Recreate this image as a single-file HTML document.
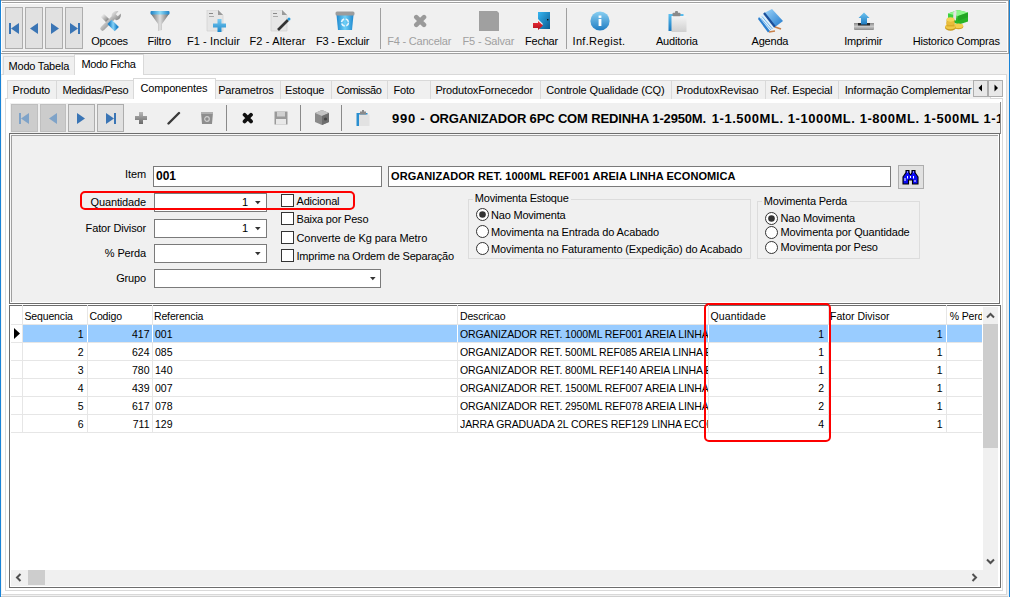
<!DOCTYPE html>
<html><head><meta charset="utf-8"><style>
html,body{margin:0;padding:0;width:1010px;height:597px;overflow:hidden;background:#f0f0f0}
body{position:relative;font-family:"Liberation Sans", sans-serif}
body div{position:absolute}
</style></head><body>
<div style="left:0px;top:0px;width:1010px;height:597px;background:#f0f0f0"></div>
<div style="left:0px;top:0px;width:1px;height:597px;background:#1883d7"></div>
<div style="left:1009px;top:0px;width:1px;height:597px;background:#1883d7"></div>
<div style="left:1px;top:0px;width:1007px;height:1px;background:#a0a0a0"></div>
<div style="left:1px;top:1px;width:1007px;height:1px;background:#ffffff"></div>
<div style="left:2px;top:2px;width:1004px;height:1px;background:#a0a0a0"></div>
<div style="left:2px;top:3px;width:1004px;height:1px;background:#ffffff"></div>
<div style="left:1px;top:1px;width:1px;height:596px;background:#ffffff"></div>
<div style="left:1008px;top:0px;width:1px;height:54px;background:#a0a0a0"></div>
<div style="left:1007px;top:1px;width:1px;height:53px;background:#ffffff"></div>
<div style="left:2px;top:51px;width:1005px;height:1px;background:#a0a0a0"></div>
<div style="left:2px;top:52px;width:1005px;height:1px;background:#ffffff"></div>
<div style="left:1px;top:53px;width:1007px;height:1px;background:#a0a0a0"></div>
<div style="left:5px;top:7px;width:18px;height:42px;background:#e1e1e1;border:1px solid #adadad;box-sizing:border-box"></div>
<div style="left:25px;top:7px;width:18px;height:42px;background:#e1e1e1;border:1px solid #adadad;box-sizing:border-box"></div>
<div style="left:45px;top:7px;width:18px;height:42px;background:#e1e1e1;border:1px solid #adadad;box-sizing:border-box"></div>
<div style="left:65px;top:7px;width:18px;height:42px;background:#e1e1e1;border:1px solid #adadad;box-sizing:border-box"></div>
<svg style="position:absolute;left:9px;top:23px" width="12" height="12" viewBox="0 0 12 12"><rect x="0" y="0" width="2" height="11" fill="#3a75b5"/><path d="M2 5.5 L10 0 L10 11 Z" fill="#3a75b5"/></svg>
<svg style="position:absolute;left:30px;top:23px" width="10" height="12" viewBox="0 0 10 12"><path d="M0 5.5 L8 0 L8 11 Z" fill="#3a75b5"/></svg>
<svg style="position:absolute;left:51px;top:23px" width="10" height="12" viewBox="0 0 10 12"><path d="M8 5.5 L0 0 L0 11 Z" fill="#3a75b5"/></svg>
<svg style="position:absolute;left:70px;top:23px" width="12" height="12" viewBox="0 0 12 12"><path d="M8 5.5 L0 0 L0 11 Z" fill="#3a75b5"/><rect x="8" y="0" width="2" height="11" fill="#3a75b5"/></svg>
<div style="left:380px;top:8px;width:1px;height:41px;background:#a0a0a0"></div>
<div style="left:566px;top:8px;width:1px;height:41px;background:#a0a0a0"></div>
<div style="top:34.7px;font-size:11px;line-height:13px;color:#000;font-weight:normal;white-space:nowrap;letter-spacing:-0.2px;left:49.5px;width:120px;text-align:center;">Opcoes</div>
<div style="top:34.7px;font-size:11px;line-height:13px;color:#000;font-weight:normal;white-space:nowrap;letter-spacing:-0.2px;left:99.19999999999999px;width:120px;text-align:center;">Filtro</div>
<div style="top:34.7px;font-size:11px;line-height:13px;color:#000;font-weight:normal;white-space:nowrap;letter-spacing:0.1px;left:153.5px;width:120px;text-align:center;">F1 - Incluir</div>
<div style="top:34.7px;font-size:11px;line-height:13px;color:#000;font-weight:normal;white-space:nowrap;letter-spacing:0.15px;left:217.5px;width:120px;text-align:center;">F2 - Alterar</div>
<div style="top:34.7px;font-size:11px;line-height:13px;color:#000;font-weight:normal;white-space:nowrap;letter-spacing:-0.2px;left:282.6px;width:120px;text-align:center;">F3 - Excluir</div>
<div style="top:34.7px;font-size:11px;line-height:13px;color:#a0a0a0;font-weight:normal;white-space:nowrap;letter-spacing:-0.2px;left:359.2px;width:120px;text-align:center;">F4 - Cancelar</div>
<div style="top:34.7px;font-size:11px;line-height:13px;color:#a0a0a0;font-weight:normal;white-space:nowrap;letter-spacing:-0.2px;left:428.4px;width:120px;text-align:center;">F5 - Salvar</div>
<div style="top:34.7px;font-size:11px;line-height:13px;color:#000;font-weight:normal;white-space:nowrap;letter-spacing:-0.2px;left:481.5px;width:120px;text-align:center;">Fechar</div>
<div style="top:34.7px;font-size:11px;line-height:13px;color:#000;font-weight:normal;white-space:nowrap;letter-spacing:0.3px;left:539.0px;width:120px;text-align:center;">Inf.Regist.</div>
<div style="top:34.7px;font-size:11px;line-height:13px;color:#000;font-weight:normal;white-space:nowrap;letter-spacing:-0.2px;left:616.8px;width:120px;text-align:center;">Auditoria</div>
<div style="top:34.7px;font-size:11px;line-height:13px;color:#000;font-weight:normal;white-space:nowrap;letter-spacing:-0.2px;left:709.9px;width:120px;text-align:center;">Agenda</div>
<div style="top:34.7px;font-size:11px;line-height:13px;color:#000;font-weight:normal;white-space:nowrap;letter-spacing:-0.2px;left:803.2px;width:120px;text-align:center;">Imprimir</div>
<div style="top:34.7px;font-size:11px;line-height:13px;color:#000;font-weight:normal;white-space:nowrap;letter-spacing:-0.2px;left:896.2px;width:120px;text-align:center;">Historico Compras</div>
<svg style="position:absolute;left:99px;top:10px" width="23" height="23" viewBox="0 0 23 23"><defs><linearGradient id="gw" x1="0" y1="0" x2="1" y2="1"><stop offset="0" stop-color="#f0f0f0"/><stop offset="0.6" stop-color="#a8a8a8"/><stop offset="1" stop-color="#707070"/></linearGradient>
<linearGradient id="gb" x1="0" y1="0" x2="1" y2="0"><stop offset="0" stop-color="#1f86cc"/><stop offset="0.5" stop-color="#86d2f6"/><stop offset="1" stop-color="#1f86cc"/></linearGradient></defs>
<path d="M3 5 L9.5 11.5" stroke="url(#gw)" stroke-width="4.5" stroke-linecap="round"/>
<path d="M3.5 18.5 L14 8" stroke="url(#gw)" stroke-width="4.5" stroke-linecap="round"/>
<path d="M12.5 5.5 C13 2 16 0.5 19.5 1.2 L16.8 4.2 L18.8 6.2 L21.8 3.5 C22.5 7 20.5 10 17 10.3 Z" fill="url(#gw)"/>
<path d="M10.5 11.8 L17.8 19.2" stroke="url(#gb)" stroke-width="6"/></svg>
<svg style="position:absolute;left:150px;top:10px" width="21" height="22" viewBox="0 0 21 22"><defs><linearGradient id="gf" x1="0" y1="0" x2="1" y2="0"><stop offset="0" stop-color="#6a6a6a"/><stop offset="0.5" stop-color="#e0e0e0"/><stop offset="1" stop-color="#6a6a6a"/></linearGradient></defs>
<path d="M1 4 L19 4 L12 14 L12 20 L8 21 L8 14 Z" fill="url(#gf)"/>
<defs><linearGradient id="gfb" x1="0" y1="0" x2="1" y2="0"><stop offset="0" stop-color="#1c7fc4"/><stop offset="0.5" stop-color="#8fdcf8"/><stop offset="1" stop-color="#1c7fc4"/></linearGradient></defs><rect x="0.5" y="1" width="19" height="3.5" rx="1" fill="url(#gfb)"/></svg>
<svg style="position:absolute;left:206px;top:10px" width="22" height="23" viewBox="0 0 22 23"><path d="M1 0 L12 0 L17 5 L17 21 L1 21 Z" fill="#e6e6e6" stroke="#cfcfcf" stroke-width="0.6"/><path d="M12 0 L12 5 L17 5 Z" fill="#9a9a9a"/>
<rect x="3" y="3" width="4" height="1" fill="#888"/><rect x="3" y="6" width="5" height="1" fill="#aaa"/>
<defs><linearGradient id="gp" x1="0" y1="0" x2="0" y2="1"><stop offset="0" stop-color="#7ccdf3"/><stop offset="1" stop-color="#1a85c8"/></linearGradient></defs><path d="M7 13.5 L11.5 13.5 L11.5 9 L15.5 9 L15.5 13.5 L20 13.5 L20 17.5 L15.5 17.5 L15.5 22 L11.5 22 L11.5 17.5 L7 17.5 Z" fill="url(#gp)"/></svg>
<svg style="position:absolute;left:270px;top:10px" width="22" height="23" viewBox="0 0 22 23"><path d="M1 0 L12 0 L17 5 L17 21 L1 21 Z" fill="#e6e6e6" stroke="#cfcfcf" stroke-width="0.6"/><path d="M12 0 L12 5 L17 5 Z" fill="#9a9a9a"/>
<rect x="3" y="3" width="4" height="1" fill="#888"/><rect x="3" y="6" width="5" height="1" fill="#aaa"/>
<path d="M8 20 L18 10" stroke="#333" stroke-width="2.6"/><circle cx="19" cy="9" r="1.5" fill="#2a9ad8"/></svg>
<svg style="position:absolute;left:335px;top:11px" width="21" height="20" viewBox="0 0 21 20"><defs><linearGradient id="gbin" x1="0" y1="0" x2="1" y2="0"><stop offset="0" stop-color="#1e88cf"/><stop offset="0.5" stop-color="#6fd0f7"/><stop offset="1" stop-color="#1e88cf"/></linearGradient></defs>
<path d="M1.5 4 L18.5 4 L17 19 L3 19 Z" fill="url(#gbin)"/><rect x="0.5" y="0.5" width="19" height="4" rx="1.5" fill="#9c9c9c"/>
<circle cx="10" cy="11.5" r="3.5" fill="none" stroke="#eaf6fd" stroke-width="1.6" stroke-dasharray="4 1.6"/></svg>
<svg style="position:absolute;left:413px;top:14px" width="15" height="14" viewBox="0 0 15 14"><path d="M3.3 3.2 L11 10.8 M11 3.2 L3.3 10.8" stroke="#9a9a9a" stroke-width="4.6" stroke-linecap="round"/></svg>
<svg style="position:absolute;left:479px;top:11px" width="20" height="20" viewBox="0 0 20 20"><path d="M0 0 L18 0 L20 2 L20 20 L0 20 Z" fill="#a0a0a0"/></svg>
<svg style="position:absolute;left:532px;top:11px" width="19" height="20" viewBox="0 0 19 20"><defs><linearGradient id="gd" x1="0" y1="0" x2="1" y2="1"><stop offset="0" stop-color="#36b6f2"/><stop offset="1" stop-color="#0b5a91"/></linearGradient>
<linearGradient id="gr" x1="0" y1="0" x2="0" y2="1"><stop offset="0" stop-color="#f0303a"/><stop offset="1" stop-color="#b0101a"/></linearGradient></defs>
<path d="M6 1 L18 1 L18 18 L7 18 L11 13 L6 8 Z" fill="url(#gd)"/><rect x="15" y="8" width="1.4" height="1.4" fill="#111"/>
<path d="M1 12 L6 12 L6 10 L11 14.5 L6 19 L6 17 L1 17 Z" fill="url(#gr)"/></svg>
<svg style="position:absolute;left:590px;top:11px" width="20" height="20" viewBox="0 0 20 20"><defs><linearGradient id="gi" x1="0" y1="0" x2="0" y2="1"><stop offset="0" stop-color="#8ad0f2"/><stop offset="1" stop-color="#1f7cc2"/></linearGradient></defs>
<circle cx="10" cy="10" r="9.6" fill="url(#gi)"/><rect x="8.6" y="8" width="2.8" height="7" fill="#fff"/><rect x="8.6" y="4.5" width="2.8" height="2.4" fill="#fff"/></svg>
<svg style="position:absolute;left:668px;top:11px" width="20" height="21" viewBox="0 0 20 21"><defs><linearGradient id="gcb" x1="0" y1="0" x2="0" y2="1"><stop offset="0" stop-color="#5cc0f0"/><stop offset="1" stop-color="#1a78c0"/></linearGradient><linearGradient id="gcp" x1="0" y1="0" x2="0" y2="1"><stop offset="0" stop-color="#f4f4f4"/><stop offset="1" stop-color="#cfcfcf"/></linearGradient></defs>
<rect x="0.5" y="3" width="15" height="17" fill="url(#gcb)"/><rect x="3.5" y="5" width="15" height="16" fill="url(#gcp)"/>
<rect x="4.5" y="1.8" width="8" height="3.5" rx="1" fill="#8a8a8a"/><rect x="7" y="0" width="3" height="2.5" rx="1" fill="#8a8a8a"/></svg>
<svg style="position:absolute;left:758px;top:8px" width="26" height="25" viewBox="0 0 26 25"><defs><linearGradient id="gbk" x1="0" y1="0" x2="1" y2="1"><stop offset="0" stop-color="#9fd6fa"/><stop offset="1" stop-color="#1f78cc"/></linearGradient></defs>
<path d="M6 5 L14 1 L25 13 L17 19 Z" fill="url(#gbk)"/>
<path d="M1 9 L6 5 L17 19 L12 23 Z" fill="#dff0fb"/>
<path d="M2.5 10 L13 22 M4 8.5 L14.5 21" stroke="#5aa6e6" stroke-width="0.8"/>
<path d="M1 9 L12 23 L10 24.5 L0 11 Z" fill="#2b7fd0"/>
<path d="M6 5 L17 19" stroke="#1b4f9a" stroke-width="2.2"/>
<path d="M17 19 L23 21" stroke="#c8804a" stroke-width="1.8"/><path d="M11 24 L17 23" stroke="#c8804a" stroke-width="1.3"/></svg>
<svg style="position:absolute;left:853px;top:12px" width="22" height="19" viewBox="0 0 22 19"><defs><linearGradient id="gu" x1="0" y1="0" x2="0" y2="1"><stop offset="0" stop-color="#6cc3f0"/><stop offset="1" stop-color="#1f7cc2"/></linearGradient>
<linearGradient id="gt" x1="0" y1="0" x2="0" y2="1"><stop offset="0" stop-color="#8a8a8a"/><stop offset="0.5" stop-color="#c8c8c8"/><stop offset="1" stop-color="#8a8a8a"/></linearGradient></defs>
<path d="M1 11 L21 11 L21 17 Q21 18 20 18 L2 18 Q1 18 1 17 Z" fill="url(#gt)"/><rect x="5" y="11" width="12" height="2.5" fill="#2a2a2a"/>
<path d="M11 0.5 L16.5 6 L14 6 L14 12.5 L8 12.5 L8 6 L5.5 6 Z" fill="url(#gu)"/></svg>
<svg style="position:absolute;left:944px;top:9px" width="25" height="23" viewBox="0 0 25 23"><path d="M4 4.5 L14 1 L24 3.5 L24 8 L14 12 L4 9 Z" fill="#3fcf3f"/><path d="M4 4.5 L14 1 L24 3.5 L14 7 Z" fill="#8cf78a"/>
<path d="M9 10 L19 6.5 L24 8 L24 12.5 L15 15.5 L9 13.5 Z" fill="#27b527"/><path d="M14 7 L24 3.5 L24 8 L14 12 Z" fill="#22a622"/>
<path d="M9.5 2.6 L12.5 1.8 L12 11.5 L9 11 Z" fill="#e2e2e2"/>
<ellipse cx="14.5" cy="17.5" rx="4.8" ry="2.8" fill="#d6a626"/><ellipse cx="14.5" cy="16.8" rx="4.6" ry="2.3" fill="#f3cf4e"/>
<ellipse cx="6.5" cy="18.5" rx="5.5" ry="3.2" fill="#c99a22"/><ellipse cx="6.5" cy="17.6" rx="5.3" ry="2.6" fill="#f0c846"/>
<rect x="2.5" y="10.5" width="8" height="7" fill="#d9ab2c"/><ellipse cx="6.5" cy="14" rx="4.2" ry="2" fill="#e9bd3a"/>
<ellipse cx="6.5" cy="10.5" rx="4" ry="2.2" fill="#f5d458"/></svg>
<div style="left:1px;top:74px;width:1006px;height:521px;background:#ffffff;border:1px solid #d9d9d9;border-left-color:#f4f4f4;box-sizing:border-box"></div>
<div style="left:1px;top:596px;width:1007px;height:1px;background:#d0d0d0"></div>
<div style="left:3px;top:56px;width:72px;height:19px;background:#f0f0f0;border:1px solid #d9d9d9;border-bottom:none;box-sizing:border-box"></div>
<div style="left:74px;top:54px;width:70px;height:21px;background:#ffffff;border:1px solid #d9d9d9;border-bottom:none;box-sizing:border-box"></div>
<div style="top:59.7px;font-size:11px;line-height:13px;color:#000;font-weight:normal;white-space:nowrap;letter-spacing:-0.2px;left:8.5px;">Modo Tabela</div>
<div style="top:57.7px;font-size:11px;line-height:13px;color:#000;font-weight:normal;white-space:nowrap;letter-spacing:-0.35px;left:81.5px;">Modo Ficha</div>
<div style="left:5px;top:98px;width:998px;height:493px;background:#ffffff;border:1px solid #d9d9d9;box-sizing:border-box"></div>
<div style="left:10px;top:103px;width:990px;height:30px;background:#f0f0f0"></div>
<div style="left:1000px;top:102px;width:1px;height:32px;background:#8a8a8a"></div>
<div style="left:7px;top:80px;width:50px;height:19px;background:#f0f0f0;border:1px solid #d9d9d9;border-bottom:none;box-sizing:border-box"></div>
<div style="left:56px;top:80px;width:78px;height:19px;background:#f0f0f0;border:1px solid #d9d9d9;border-bottom:none;box-sizing:border-box"></div>
<div style="left:133px;top:78px;width:83px;height:21px;background:#ffffff;border:1px solid #d9d9d9;border-bottom:none;box-sizing:border-box"></div>
<div style="left:215px;top:80px;width:66px;height:19px;background:#f0f0f0;border:1px solid #d9d9d9;border-bottom:none;box-sizing:border-box"></div>
<div style="left:280px;top:80px;width:52px;height:19px;background:#f0f0f0;border:1px solid #d9d9d9;border-bottom:none;box-sizing:border-box"></div>
<div style="left:331px;top:80px;width:57px;height:19px;background:#f0f0f0;border:1px solid #d9d9d9;border-bottom:none;box-sizing:border-box"></div>
<div style="left:387px;top:80px;width:44px;height:19px;background:#f0f0f0;border:1px solid #d9d9d9;border-bottom:none;box-sizing:border-box"></div>
<div style="left:430px;top:80px;width:111px;height:19px;background:#f0f0f0;border:1px solid #d9d9d9;border-bottom:none;box-sizing:border-box"></div>
<div style="left:540px;top:80px;width:132px;height:19px;background:#f0f0f0;border:1px solid #d9d9d9;border-bottom:none;box-sizing:border-box"></div>
<div style="left:671px;top:80px;width:95px;height:19px;background:#f0f0f0;border:1px solid #d9d9d9;border-bottom:none;box-sizing:border-box"></div>
<div style="left:765px;top:80px;width:74px;height:19px;background:#f0f0f0;border:1px solid #d9d9d9;border-bottom:none;box-sizing:border-box"></div>
<div style="left:838px;top:80px;width:153px;height:19px;background:#f0f0f0;border:1px solid #d9d9d9;border-bottom:none;box-sizing:border-box"></div>
<div style="top:83.7px;font-size:11px;line-height:13px;color:#000;font-weight:normal;white-space:nowrap;letter-spacing:-0.15px;left:12.6px;">Produto</div>
<div style="top:83.7px;font-size:11px;line-height:13px;color:#000;font-weight:normal;white-space:nowrap;letter-spacing:-0.32px;left:62.4px;">Medidas/Peso</div>
<div style="top:81.7px;font-size:11px;line-height:13px;color:#000;font-weight:normal;white-space:nowrap;letter-spacing:-0.15px;left:140.4px;">Componentes</div>
<div style="top:83.7px;font-size:11px;line-height:13px;color:#000;font-weight:normal;white-space:nowrap;letter-spacing:-0.15px;left:218.2px;">Parametros</div>
<div style="top:83.7px;font-size:11px;line-height:13px;color:#000;font-weight:normal;white-space:nowrap;letter-spacing:-0.15px;left:285px;">Estoque</div>
<div style="top:83.7px;font-size:11px;line-height:13px;color:#000;font-weight:normal;white-space:nowrap;letter-spacing:-0.5px;left:336.4px;">Comissão</div>
<div style="top:83.7px;font-size:11px;line-height:13px;color:#000;font-weight:normal;white-space:nowrap;letter-spacing:-0.15px;left:393.4px;">Foto</div>
<div style="top:83.7px;font-size:11px;line-height:13px;color:#000;font-weight:normal;white-space:nowrap;letter-spacing:-0.15px;left:435.4px;">ProdutoxFornecedor</div>
<div style="top:83.7px;font-size:11px;line-height:13px;color:#000;font-weight:normal;white-space:nowrap;letter-spacing:-0.15px;left:546.2px;">Controle Qualidade (CQ)</div>
<div style="top:83.7px;font-size:11px;line-height:13px;color:#000;font-weight:normal;white-space:nowrap;letter-spacing:-0.1px;left:676.3px;">ProdutoxRevisao</div>
<div style="top:83.7px;font-size:11px;line-height:13px;color:#000;font-weight:normal;white-space:nowrap;letter-spacing:-0.22px;left:770.2px;">Ref. Especial</div>
<div style="top:83.7px;font-size:11px;line-height:13px;color:#000;font-weight:normal;white-space:nowrap;letter-spacing:-0.15px;left:844.7px;">Informação Complementar</div>
<div style="left:973px;top:80px;width:15px;height:17px;background:#e8e8e8;border:1px solid #adadad;box-sizing:border-box"></div>
<div style="left:988px;top:80px;width:15px;height:17px;background:#e8e8e8;border:1px solid #adadad;box-sizing:border-box"></div>
<svg style="position:absolute;left:977px;top:84px" width="8" height="8" viewBox="0 0 8 8"><path d="M5 0.5 L5 7.5 L1.5 4 Z" fill="#000"/></svg>
<svg style="position:absolute;left:992px;top:84px" width="8" height="8" viewBox="0 0 8 8"><path d="M2.5 0.5 L2.5 7.5 L6 4 Z" fill="#000"/></svg>
<div style="left:11px;top:104px;width:27px;height:28px;background:#cccccc;border:1px solid #bfbfbf;box-sizing:border-box"></div>
<div style="left:40px;top:104px;width:26px;height:28px;background:#cccccc;border:1px solid #bfbfbf;box-sizing:border-box"></div>
<div style="left:68px;top:104px;width:27px;height:28px;background:#e1e1e1;border:1px solid #adadad;box-sizing:border-box"></div>
<div style="left:97px;top:104px;width:27px;height:28px;background:#e1e1e1;border:1px solid #adadad;box-sizing:border-box"></div>
<svg style="position:absolute;left:19px;top:113px" width="11" height="12" viewBox="0 0 11 12"><rect x="0" y="0" width="2" height="11" fill="#7fa3c8"/><path d="M2 5.5 L10 0 L10 11 Z" fill="#7fa3c8"/></svg>
<svg style="position:absolute;left:49px;top:113px" width="10" height="12" viewBox="0 0 10 12"><path d="M0 5.5 L8 0 L8 11 Z" fill="#7fa3c8"/></svg>
<svg style="position:absolute;left:77px;top:113px" width="10" height="12" viewBox="0 0 10 12"><path d="M8 5.5 L0 0 L0 11 Z" fill="#3a75b5"/></svg>
<svg style="position:absolute;left:106px;top:113px" width="11" height="12" viewBox="0 0 11 12"><path d="M8 5.5 L0 0 L0 11 Z" fill="#3a75b5"/><rect x="8" y="0" width="2" height="11" fill="#3a75b5"/></svg>
<div style="left:226px;top:105px;width:1px;height:26px;background:#8a8a8a"></div>
<div style="left:300px;top:105px;width:1px;height:26px;background:#8a8a8a"></div>
<div style="left:341px;top:105px;width:1px;height:26px;background:#8a8a8a"></div>
<svg style="position:absolute;left:135px;top:112px" width="12" height="12" viewBox="0 0 12 12"><defs><linearGradient id="gp2" x1="0" y1="0" x2="0" y2="1"><stop offset="0" stop-color="#b8b8b8"/><stop offset="1" stop-color="#6a6a6a"/></linearGradient></defs><path d="M4 0 L8 0 L8 4 L12 4 L12 8 L8 8 L8 12 L4 12 L4 8 L0 8 L0 4 L4 4 Z" fill="url(#gp2)"/></svg>
<svg style="position:absolute;left:167px;top:111px" width="14" height="14" viewBox="0 0 14 14"><path d="M1.5 12.5 L12 2" stroke="#3a3a3a" stroke-width="2.4" stroke-linecap="round"/></svg>
<svg style="position:absolute;left:200px;top:112px" width="14" height="13" viewBox="0 0 14 13"><path d="M1 0.5 L13 0.5 L12 12 L2 12 Z" fill="#8e8e8e"/><rect x="1" y="0" width="12" height="2" fill="#b0b0b0"/><circle cx="7" cy="7" r="2.3" fill="none" stroke="#d0d0d0" stroke-width="1.2"/></svg>
<svg style="position:absolute;left:242px;top:112px" width="12" height="12" viewBox="0 0 12 12"><path d="M2.6 2.8 L9 9.4 M9 2.8 L2.6 9.4" stroke="#111" stroke-width="3.8" stroke-linecap="round"/></svg>
<svg style="position:absolute;left:274px;top:111px" width="14" height="14" viewBox="0 0 14 14"><rect x="0.5" y="0.5" width="13" height="13" fill="#9a9a9a"/><rect x="3" y="0.5" width="8" height="5" fill="#d0d0d0"/><rect x="2" y="8" width="10" height="5.5" fill="#e8e8e8"/></svg>
<svg style="position:absolute;left:314px;top:110px" width="16" height="15" viewBox="0 0 16 15"><path d="M1 3 L8 0 L15 3 L15 12 L8 15 L1 12 Z" fill="#8a8a8a"/><path d="M1 3 L8 0 L15 3 L8 6 Z" fill="#c4c4c4"/><path d="M8 6 L15 3 L15 12 L8 15 Z" fill="#6e6e6e"/><circle cx="11.5" cy="9" r="1.6" fill="#444"/></svg>
<svg style="position:absolute;left:356px;top:110px" width="14" height="16" viewBox="0 0 14 16"><rect x="0.5" y="3" width="11" height="13" fill="#2a8fd0"/><rect x="3" y="4.5" width="10.5" height="11.5" fill="#e2e2e2"/><rect x="4" y="1.5" width="6" height="3" fill="#8a8a8a"/><rect x="6" y="0" width="2" height="2" fill="#8a8a8a"/></svg>
<div style="left:380px;top:103px;width:620px;height:30px;overflow:hidden">
<div style="top:8.0px;font-size:13px;line-height:16px;color:#000;font-weight:bold;white-space:nowrap;left:12px;"><span style="letter-spacing:0.73px">990 - </span><span style="letter-spacing:-0.155px">ORGANIZADOR 6PC COM REDINHA 1-2950M. </span><span style="margin-left:2.3px;letter-spacing:0.54px">1-1.500ML. 1-1000ML. 1-800ML. 1-500ML 1-1000ML</span></div>
</div>
<div style="left:9px;top:133px;width:991px;height:171px;background:#f0f0f0;border:1px solid #6d6d6d;box-sizing:border-box"></div>
<div style="left:10px;top:134px;width:989px;height:1px;background:#f8f8f8"></div>
<div style="left:10px;top:134px;width:1px;height:169px;background:#f8f8f8"></div>
<div style="left:11px;top:135px;width:987px;height:1px;background:#a0a0a0"></div>
<div style="left:11px;top:135px;width:1px;height:167px;background:#a0a0a0"></div>
<div style="left:10px;top:302px;width:989px;height:1px;background:#ffffff"></div>
<div style="left:998px;top:134px;width:1px;height:169px;background:#ffffff"></div>
<div style="left:9px;top:304px;width:993px;height:1px;background:#ffffff"></div>
<div style="top:167.7px;font-size:11px;line-height:13px;color:#000;font-weight:normal;white-space:nowrap;letter-spacing:-0.1px;left:-154px;width:300px;text-align:right;">Item</div>
<div style="left:153px;top:166px;width:229px;height:21px;background:#fff;border:1px solid #7a7a7a;box-sizing:border-box"></div>
<div style="top:168.8px;font-size:12px;line-height:14px;color:#000;font-weight:bold;white-space:nowrap;letter-spacing:0px;left:156px;">001</div>
<div style="left:388px;top:166px;width:503px;height:21px;background:#fff;border:1px solid #7a7a7a;box-sizing:border-box"></div>
<div style="top:169.7px;font-size:11px;line-height:13px;color:#000;font-weight:bold;white-space:nowrap;letter-spacing:0.07px;left:391px;">ORGANIZADOR RET. 1000ML REF001 AREIA LINHA ECONOMICA</div>
<div style="left:898px;top:165px;width:26px;height:24px;background:#e1e1e1;border:1px solid #adadad;box-sizing:border-box"></div>
<svg style="position:absolute;left:902px;top:169px" width="17" height="16" viewBox="0 0 17 16"><path d="M4 1.5 L7 1.5 L7 3.5 L8 5.5 L9 5.5 L10 3.5 L10 1.5 L13 1.5 L13 3.5 L15 6.5 L16 8 L16 15 L10.5 15 L10.5 11 L6.5 11 L6.5 15 L1 15 L1 8 L2 6.5 L4 3.5 Z" fill="#0a0af5" stroke="#000" stroke-width="1.1" stroke-linejoin="miter"/><rect x="5" y="2.5" width="1" height="1" fill="#fff"/><rect x="11" y="2.5" width="1" height="1" fill="#fff"/><rect x="2.5" y="9" width="1" height="3" fill="#fff"/><rect x="5" y="7" width="1" height="2.5" fill="#fff"/><rect x="8" y="7" width="1" height="2" fill="#fff"/><rect x="11" y="7" width="1" height="2.5" fill="#fff"/><rect x="12.5" y="11" width="1" height="2" fill="#fff"/></svg>
<div style="top:195.7px;font-size:11px;line-height:13px;color:#000;font-weight:normal;white-space:nowrap;letter-spacing:-0.15px;left:-154px;width:300px;text-align:right;">Quantidade</div>
<div style="left:154px;top:193px;width:113px;height:19px;background:#fff;border:1px solid #7a7a7a;box-sizing:border-box"></div>
<div style="top:195.7px;font-size:11px;line-height:13px;color:#000;font-weight:normal;white-space:nowrap;left:208.2px;width:40px;text-align:right;">1</div>
<svg style="position:absolute;left:254.5px;top:201px" width="6" height="4" viewBox="0 0 6 4"><path d="M0 0 L5.6 0 L2.8 3.2 Z" fill="#333"/></svg>
<div style="top:221.7px;font-size:11px;line-height:13px;color:#000;font-weight:normal;white-space:nowrap;letter-spacing:-0.15px;left:-154px;width:300px;text-align:right;">Fator Divisor</div>
<div style="left:154px;top:219px;width:113px;height:19px;background:#fff;border:1px solid #7a7a7a;box-sizing:border-box"></div>
<div style="top:221.7px;font-size:11px;line-height:13px;color:#000;font-weight:normal;white-space:nowrap;left:208.2px;width:40px;text-align:right;">1</div>
<svg style="position:absolute;left:254.5px;top:227px" width="6" height="4" viewBox="0 0 6 4"><path d="M0 0 L5.6 0 L2.8 3.2 Z" fill="#333"/></svg>
<div style="top:246.7px;font-size:11px;line-height:13px;color:#000;font-weight:normal;white-space:nowrap;letter-spacing:-0.15px;left:-154px;width:300px;text-align:right;">% Perda</div>
<div style="left:154px;top:244px;width:113px;height:19px;background:#fff;border:1px solid #7a7a7a;box-sizing:border-box"></div>
<svg style="position:absolute;left:254.5px;top:252px" width="6" height="4" viewBox="0 0 6 4"><path d="M0 0 L5.6 0 L2.8 3.2 Z" fill="#333"/></svg>
<div style="top:271.7px;font-size:11px;line-height:13px;color:#000;font-weight:normal;white-space:nowrap;letter-spacing:-0.15px;left:-154px;width:300px;text-align:right;">Grupo</div>
<div style="left:154px;top:269px;width:227px;height:19px;background:#fff;border:1px solid #7a7a7a;box-sizing:border-box"></div>
<svg style="position:absolute;left:369.5px;top:277px" width="6" height="4" viewBox="0 0 6 4"><path d="M0 0 L5.6 0 L2.8 3.2 Z" fill="#333"/></svg>
<div style="left:281px;top:194px;width:13px;height:13px;background:#fff;border:1px solid #333;box-sizing:border-box"></div>
<div style="top:194.7px;font-size:11px;line-height:13px;color:#000;font-weight:normal;white-space:nowrap;letter-spacing:-0.2px;left:296.5px;">Adicional</div>
<div style="left:281px;top:212px;width:13px;height:13px;background:#fff;border:1px solid #333;box-sizing:border-box"></div>
<div style="top:212.7px;font-size:11px;line-height:13px;color:#000;font-weight:normal;white-space:nowrap;letter-spacing:-0.2px;left:296.5px;">Baixa por Peso</div>
<div style="left:281px;top:231px;width:13px;height:13px;background:#fff;border:1px solid #333;box-sizing:border-box"></div>
<div style="top:231.9px;font-size:11px;line-height:13px;color:#000;font-weight:normal;white-space:nowrap;letter-spacing:-0.08px;left:296.5px;">Converte de Kg para Metro</div>
<div style="left:281px;top:249px;width:13px;height:13px;background:#fff;border:1px solid #333;box-sizing:border-box"></div>
<div style="top:249.7px;font-size:11px;line-height:13px;color:#000;font-weight:normal;white-space:nowrap;letter-spacing:-0.2px;left:296.5px;">Imprime na Ordem de Separação</div>
<div style="left:468px;top:199px;width:283px;height:60px;border:1px solid #dcdcdc;box-sizing:border-box"></div>
<div style="left:473px;top:193px;width:98px;height:12px;background:#f0f0f0"></div>
<div style="top:192.2px;font-size:11px;line-height:13px;color:#000;font-weight:normal;white-space:nowrap;letter-spacing:-0.2px;left:474.8px;">Movimenta Estoque</div>
<svg style="position:absolute;left:476px;top:208px" width="13" height="13" viewBox="0 0 13 13"><circle cx="6.5" cy="6.5" r="6" fill="#fff" stroke="#333" stroke-width="1"/><circle cx="6.5" cy="6.5" r="3.3" fill="#333"/></svg>
<div style="top:208.7px;font-size:11px;line-height:13px;color:#000;font-weight:normal;white-space:nowrap;letter-spacing:-0.2px;left:491px;">Nao Movimenta</div>
<svg style="position:absolute;left:476px;top:225px" width="13" height="13" viewBox="0 0 13 13"><circle cx="6.5" cy="6.5" r="6" fill="#fff" stroke="#333" stroke-width="1"/></svg>
<div style="top:225.7px;font-size:11px;line-height:13px;color:#000;font-weight:normal;white-space:nowrap;letter-spacing:-0.12px;left:491px;">Movimenta na Entrada do Acabado</div>
<svg style="position:absolute;left:476px;top:242px" width="13" height="13" viewBox="0 0 13 13"><circle cx="6.5" cy="6.5" r="6" fill="#fff" stroke="#333" stroke-width="1"/></svg>
<div style="top:242.7px;font-size:11px;line-height:13px;color:#000;font-weight:normal;white-space:nowrap;letter-spacing:-0.13px;left:491px;">Movimenta no Faturamento (Expedição) do Acabado</div>
<div style="left:757px;top:201px;width:163px;height:58px;border:1px solid #dcdcdc;box-sizing:border-box"></div>
<div style="left:762px;top:195px;width:88px;height:12px;background:#f0f0f0"></div>
<div style="top:195.2px;font-size:11px;line-height:13px;color:#000;font-weight:normal;white-space:nowrap;letter-spacing:-0.2px;left:763.8px;">Movimenta Perda</div>
<svg style="position:absolute;left:765px;top:212px" width="13" height="13" viewBox="0 0 13 13"><circle cx="6.5" cy="6.5" r="6" fill="#fff" stroke="#333" stroke-width="1"/><circle cx="6.5" cy="6.5" r="3.3" fill="#333"/></svg>
<div style="top:211.7px;font-size:11px;line-height:13px;color:#000;font-weight:normal;white-space:nowrap;letter-spacing:-0.2px;left:780.5px;">Nao Movimenta</div>
<svg style="position:absolute;left:765px;top:226px" width="13" height="13" viewBox="0 0 13 13"><circle cx="6.5" cy="6.5" r="6" fill="#fff" stroke="#333" stroke-width="1"/></svg>
<div style="top:226.3px;font-size:11px;line-height:13px;color:#000;font-weight:normal;white-space:nowrap;letter-spacing:-0.15px;left:780.5px;">Movimenta por Quantidade</div>
<svg style="position:absolute;left:765px;top:241px" width="13" height="13" viewBox="0 0 13 13"><circle cx="6.5" cy="6.5" r="6" fill="#fff" stroke="#333" stroke-width="1"/></svg>
<div style="top:241.3px;font-size:11px;line-height:13px;color:#000;font-weight:normal;white-space:nowrap;letter-spacing:-0.2px;left:780.5px;">Movimenta por Peso</div>
<div style="left:9px;top:305px;width:992px;height:283px;background:#ffffff;border:1px solid #6d6d6d;box-sizing:border-box"></div>
<div style="left:983px;top:307px;width:15px;height:263px;background:#f0f0f0"></div>
<div style="left:983px;top:324px;width:15px;height:124px;background:#cdcdcd"></div>
<div style="left:11px;top:570px;width:972px;height:16px;background:#f0f0f0"></div>
<div style="left:983px;top:570px;width:15px;height:16px;background:#f0f0f0"></div>
<div style="left:28px;top:570px;width:17px;height:15px;background:#cdcdcd"></div>
<div style="left:22px;top:305px;width:1px;height:128px;background:#e6e6e6"></div>
<div style="left:87px;top:305px;width:1px;height:128px;background:#e6e6e6"></div>
<div style="left:152px;top:305px;width:1px;height:128px;background:#e6e6e6"></div>
<div style="left:457px;top:305px;width:1px;height:128px;background:#e6e6e6"></div>
<div style="left:708px;top:305px;width:1px;height:128px;background:#e6e6e6"></div>
<div style="left:828px;top:305px;width:1px;height:128px;background:#e6e6e6"></div>
<div style="left:946px;top:305px;width:1px;height:128px;background:#e6e6e6"></div>
<div style="left:11px;top:324px;width:971px;height:1px;background:#e6e6e6"></div>
<div style="left:11px;top:342px;width:971px;height:1px;background:#e6e6e6"></div>
<div style="left:11px;top:360px;width:971px;height:1px;background:#e6e6e6"></div>
<div style="left:11px;top:378px;width:971px;height:1px;background:#e6e6e6"></div>
<div style="left:11px;top:396px;width:971px;height:1px;background:#e6e6e6"></div>
<div style="left:11px;top:414px;width:971px;height:1px;background:#e6e6e6"></div>
<div style="left:11px;top:432px;width:971px;height:1px;background:#e6e6e6"></div>
<div style="left:23px;top:325px;width:959px;height:17px;background:#99ccff"></div>
<div style="left:87px;top:325px;width:1px;height:17px;background:#ffffff"></div>
<div style="left:152px;top:325px;width:1px;height:17px;background:#ffffff"></div>
<div style="left:457px;top:325px;width:1px;height:17px;background:#ffffff"></div>
<div style="left:708px;top:325px;width:1px;height:17px;background:#ffffff"></div>
<div style="left:828px;top:325px;width:1px;height:17px;background:#ffffff"></div>
<div style="left:946px;top:325px;width:1px;height:17px;background:#ffffff"></div>
<svg style="position:absolute;left:14px;top:328px" width="7" height="11" viewBox="0 0 7 11"><path d="M0 0 L6 5.5 L0 11 Z" fill="#000"/></svg>
<div style="top:310.1px;font-size:10.5px;line-height:13px;color:#000;font-weight:normal;white-space:nowrap;letter-spacing:-0.15px;left:24.5px;">Sequencia</div>
<div style="top:310.1px;font-size:10.5px;line-height:13px;color:#000;font-weight:normal;white-space:nowrap;letter-spacing:-0.15px;left:89.5px;">Codigo</div>
<div style="top:310.1px;font-size:10.5px;line-height:13px;color:#000;font-weight:normal;white-space:nowrap;letter-spacing:-0.15px;left:154px;">Referencia</div>
<div style="top:310.1px;font-size:10.5px;line-height:13px;color:#000;font-weight:normal;white-space:nowrap;letter-spacing:-0.15px;left:460px;">Descricao</div>
<div style="top:310.1px;font-size:10.5px;line-height:13px;color:#000;font-weight:normal;white-space:nowrap;letter-spacing:0.1px;left:710.6px;">Quantidade</div>
<div style="top:310.1px;font-size:10.5px;line-height:13px;color:#000;font-weight:normal;white-space:nowrap;letter-spacing:0.0px;left:830px;">Fator Divisor</div>
<div style="left:947px;top:306px;width:35px;height:18px;overflow:hidden">
<div style="top:4.1px;font-size:10.5px;line-height:13px;color:#000;font-weight:normal;white-space:nowrap;letter-spacing:-0.15px;left:2.7999999999999545px;">% Perda</div>
</div>
<svg style="position:absolute;left:986px;top:312px" width="9" height="7" viewBox="0 0 9 7"><path d="M1 5.5 L4.5 2 L8 5.5" stroke="#505050" stroke-width="2" fill="none"/></svg>
<svg style="position:absolute;left:986px;top:558px" width="9" height="7" viewBox="0 0 9 7"><path d="M1 1.5 L4.5 5 L8 1.5" stroke="#505050" stroke-width="2" fill="none"/></svg>
<svg style="position:absolute;left:15px;top:573px" width="7" height="9" viewBox="0 0 7 9"><path d="M5.5 1 L2 4.5 L5.5 8" stroke="#505050" stroke-width="2" fill="none"/></svg>
<svg style="position:absolute;left:971px;top:573px" width="7" height="9" viewBox="0 0 7 9"><path d="M1.5 1 L5 4.5 L1.5 8" stroke="#505050" stroke-width="2" fill="none"/></svg>
<div style="top:327.9px;font-size:10.5px;line-height:13px;color:#000;font-weight:normal;white-space:nowrap;left:33.5px;width:50px;text-align:right;">1</div>
<div style="top:327.9px;font-size:10.5px;line-height:13px;color:#000;font-weight:normal;white-space:nowrap;left:99.5px;width:50px;text-align:right;">417</div>
<div style="top:327.9px;font-size:10.5px;line-height:13px;color:#000;font-weight:normal;white-space:nowrap;left:155px;">001</div>
<div style="left:460px;top:324px;width:248px;height:17px;overflow:hidden">
<div style="top:3.9px;font-size:10.5px;line-height:13px;color:#000;font-weight:normal;white-space:nowrap;letter-spacing:-0.1px;left:0px;">ORGANIZADOR RET. 1000ML REF001 AREIA LINHA ECONOMICA</div>
</div>
<div style="top:327.9px;font-size:10.5px;line-height:13px;color:#000;font-weight:normal;white-space:nowrap;left:774px;width:50px;text-align:right;">1</div>
<div style="top:327.9px;font-size:10.5px;line-height:13px;color:#000;font-weight:normal;white-space:nowrap;left:892.5px;width:50px;text-align:right;">1</div>
<div style="top:345.9px;font-size:10.5px;line-height:13px;color:#000;font-weight:normal;white-space:nowrap;left:33.5px;width:50px;text-align:right;">2</div>
<div style="top:345.9px;font-size:10.5px;line-height:13px;color:#000;font-weight:normal;white-space:nowrap;left:99.5px;width:50px;text-align:right;">624</div>
<div style="top:345.9px;font-size:10.5px;line-height:13px;color:#000;font-weight:normal;white-space:nowrap;left:155px;">085</div>
<div style="left:460px;top:342px;width:248px;height:17px;overflow:hidden">
<div style="top:3.9px;font-size:10.5px;line-height:13px;color:#000;font-weight:normal;white-space:nowrap;letter-spacing:-0.1px;left:0px;">ORGANIZADOR RET. 500ML REF085 AREIA LINHA ECONOMICA</div>
</div>
<div style="top:345.9px;font-size:10.5px;line-height:13px;color:#000;font-weight:normal;white-space:nowrap;left:774px;width:50px;text-align:right;">1</div>
<div style="top:345.9px;font-size:10.5px;line-height:13px;color:#000;font-weight:normal;white-space:nowrap;left:892.5px;width:50px;text-align:right;">1</div>
<div style="top:363.9px;font-size:10.5px;line-height:13px;color:#000;font-weight:normal;white-space:nowrap;left:33.5px;width:50px;text-align:right;">3</div>
<div style="top:363.9px;font-size:10.5px;line-height:13px;color:#000;font-weight:normal;white-space:nowrap;left:99.5px;width:50px;text-align:right;">780</div>
<div style="top:363.9px;font-size:10.5px;line-height:13px;color:#000;font-weight:normal;white-space:nowrap;left:155px;">140</div>
<div style="left:460px;top:360px;width:248px;height:17px;overflow:hidden">
<div style="top:3.9px;font-size:10.5px;line-height:13px;color:#000;font-weight:normal;white-space:nowrap;letter-spacing:-0.1px;left:0px;">ORGANIZADOR RET. 800ML REF140 AREIA LINHA ECONOMICA</div>
</div>
<div style="top:363.9px;font-size:10.5px;line-height:13px;color:#000;font-weight:normal;white-space:nowrap;left:774px;width:50px;text-align:right;">1</div>
<div style="top:363.9px;font-size:10.5px;line-height:13px;color:#000;font-weight:normal;white-space:nowrap;left:892.5px;width:50px;text-align:right;">1</div>
<div style="top:381.9px;font-size:10.5px;line-height:13px;color:#000;font-weight:normal;white-space:nowrap;left:33.5px;width:50px;text-align:right;">4</div>
<div style="top:381.9px;font-size:10.5px;line-height:13px;color:#000;font-weight:normal;white-space:nowrap;left:99.5px;width:50px;text-align:right;">439</div>
<div style="top:381.9px;font-size:10.5px;line-height:13px;color:#000;font-weight:normal;white-space:nowrap;left:155px;">007</div>
<div style="left:460px;top:378px;width:248px;height:17px;overflow:hidden">
<div style="top:3.9px;font-size:10.5px;line-height:13px;color:#000;font-weight:normal;white-space:nowrap;letter-spacing:-0.1px;left:0px;">ORGANIZADOR RET. 1500ML REF007 AREIA LINHA ECONOMICA</div>
</div>
<div style="top:381.9px;font-size:10.5px;line-height:13px;color:#000;font-weight:normal;white-space:nowrap;left:774px;width:50px;text-align:right;">2</div>
<div style="top:381.9px;font-size:10.5px;line-height:13px;color:#000;font-weight:normal;white-space:nowrap;left:892.5px;width:50px;text-align:right;">1</div>
<div style="top:399.9px;font-size:10.5px;line-height:13px;color:#000;font-weight:normal;white-space:nowrap;left:33.5px;width:50px;text-align:right;">5</div>
<div style="top:399.9px;font-size:10.5px;line-height:13px;color:#000;font-weight:normal;white-space:nowrap;left:99.5px;width:50px;text-align:right;">617</div>
<div style="top:399.9px;font-size:10.5px;line-height:13px;color:#000;font-weight:normal;white-space:nowrap;left:155px;">078</div>
<div style="left:460px;top:396px;width:248px;height:17px;overflow:hidden">
<div style="top:3.9px;font-size:10.5px;line-height:13px;color:#000;font-weight:normal;white-space:nowrap;letter-spacing:-0.1px;left:0px;">ORGANIZADOR RET. 2950ML REF078 AREIA LINHA ECONOMICA</div>
</div>
<div style="top:399.9px;font-size:10.5px;line-height:13px;color:#000;font-weight:normal;white-space:nowrap;left:774px;width:50px;text-align:right;">2</div>
<div style="top:399.9px;font-size:10.5px;line-height:13px;color:#000;font-weight:normal;white-space:nowrap;left:892.5px;width:50px;text-align:right;">1</div>
<div style="top:417.9px;font-size:10.5px;line-height:13px;color:#000;font-weight:normal;white-space:nowrap;left:33.5px;width:50px;text-align:right;">6</div>
<div style="top:417.9px;font-size:10.5px;line-height:13px;color:#000;font-weight:normal;white-space:nowrap;left:99.5px;width:50px;text-align:right;">711</div>
<div style="top:417.9px;font-size:10.5px;line-height:13px;color:#000;font-weight:normal;white-space:nowrap;left:155px;">129</div>
<div style="left:460px;top:414px;width:248px;height:17px;overflow:hidden">
<div style="top:3.9px;font-size:10.5px;line-height:13px;color:#000;font-weight:normal;white-space:nowrap;letter-spacing:-0.1px;left:0px;">JARRA GRADUADA 2L CORES REF129 LINHA ECONOMICA</div>
</div>
<div style="top:417.9px;font-size:10.5px;line-height:13px;color:#000;font-weight:normal;white-space:nowrap;left:774px;width:50px;text-align:right;">4</div>
<div style="top:417.9px;font-size:10.5px;line-height:13px;color:#000;font-weight:normal;white-space:nowrap;left:892.5px;width:50px;text-align:right;">1</div>
<div style="left:80px;top:191px;width:275px;height:19px;border:2px solid #fd0000;border-radius:5px;box-sizing:border-box"></div>
<div style="left:704px;top:303px;width:127px;height:139px;border:2px solid #fd0000;border-radius:5px;box-sizing:border-box"></div>
</body></html>
